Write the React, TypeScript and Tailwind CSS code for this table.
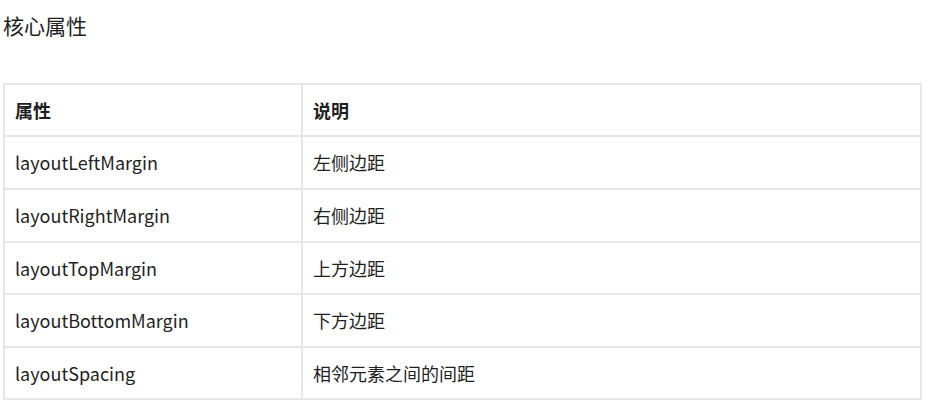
const rows = [
  ["layoutLeftMargin", "左侧边距", "h-[53px]"],
  ["layoutRightMargin", "右侧边距", "h-[53px]"],
  ["layoutTopMargin", "上方边距", "h-[52px]"],
  ["layoutBottomMargin", "下方边距", "h-[53px]"],
  ["layoutSpacing", "相邻元素之间的间距", "h-[52px]"],
];

export default function App() {
  return (
    <div
      className="w-[928px] h-[405px] bg-white text-[#1f1f1f] overflow-hidden"
      style={{ fontFamily: '"Noto Sans CJK SC", "Noto Sans", sans-serif' }}
    >
      <h2 className="pl-[3px] pt-[10px] text-[21px] leading-[30px] font-normal">核心属性</h2>

      <table className="ml-[3px] mt-[43px] w-[919px] border-collapse table-fixed text-[18px]">
        <colgroup>
          <col className="w-[298px]" />
          <col />
        </colgroup>
        <thead>
          <tr className="h-[52px]">
            <th className="border-2 border-[#e6e6e6] px-[10px] text-left font-bold">属性</th>
            <th className="border-2 border-[#e6e6e6] px-[10px] text-left font-bold">说明</th>
          </tr>
        </thead>
        <tbody>
          {rows.map(([name, desc, h]) => (
            <tr key={name} className={h}>
              <td className="border-2 border-[#e6e6e6] px-[10px]">{name}</td>
              <td className="border-2 border-[#e6e6e6] px-[10px]">{desc}</td>
            </tr>
          ))}
        </tbody>
      </table>
    </div>
  );
}
